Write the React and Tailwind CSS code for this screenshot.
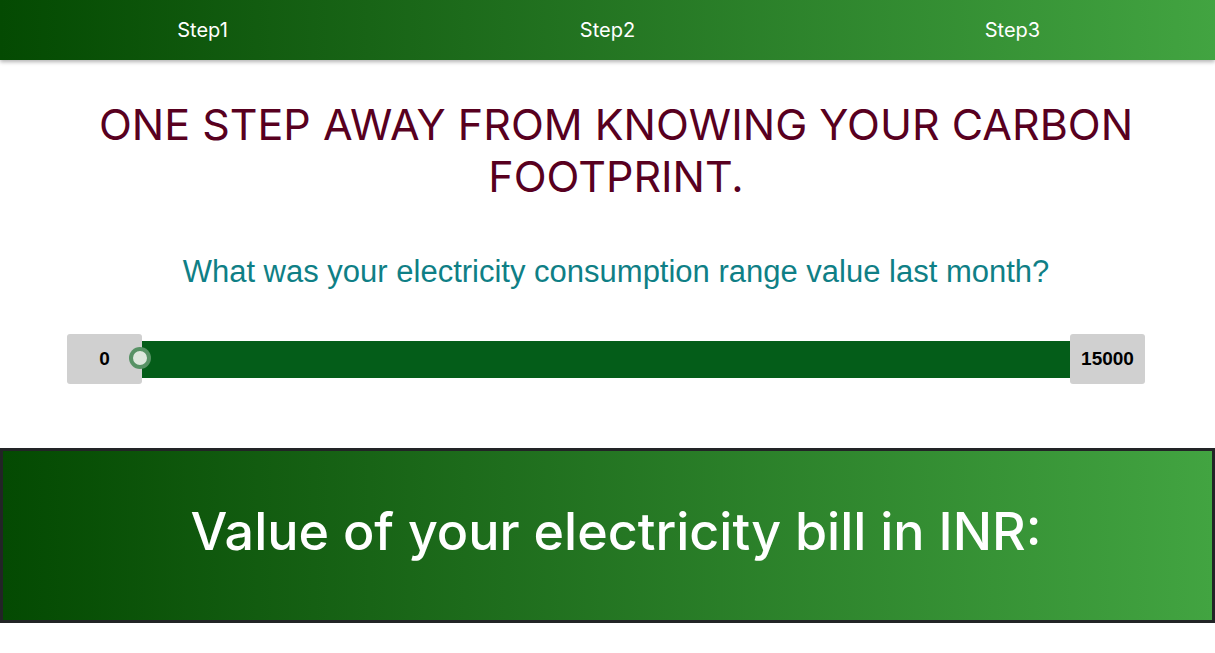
import React from "react";

const steps = ["Step1", "Step2", "Step3"];

export default function App() {
  return (
    <div className="min-h-[653px] bg-white" style={{ fontFamily: "Inter, sans-serif" }}>
      {/* top steps bar */}
      <nav className="grid h-[60px] grid-cols-3 items-center bg-gradient-to-r from-[#044a02] to-[#42a441] shadow-[0_2px_4px_rgba(0,0,0,0.3)]">
        {steps.map((s) => (
          <div key={s} className="text-center text-[20px] font-normal text-white">
            {s}
          </div>
        ))}
      </nav>

      <h1 className="mx-auto mt-[38px] max-w-[1100px] pl-[17px] text-center text-[43px] leading-[1.22] font-normal text-[#58001f]">
        ONE STEP AWAY FROM KNOWING YOUR CARBON FOOTPRINT.
      </h1>

      <p
        className="mt-[46px] pl-[17px] text-center text-[31px] text-[#0f7f86]"
        style={{ fontFamily: '"Liberation Sans", Arial, sans-serif' }}
      >
        What was your electricity consumption range value last month?
      </p>

      {/* range slider */}
      <div
        className="relative mt-[39px] ml-[67px] flex h-[50px] w-[1078px] items-center"
        style={{ fontFamily: '"Liberation Sans", Arial, sans-serif' }}
      >
        <div className="flex h-[50px] w-[75px] items-center justify-center rounded-[3px] bg-[#d0d0d0] text-[19px] font-bold text-black">
          0
        </div>
        <div className="h-[37px] flex-1 bg-[#045d19]" />
        <div className="flex h-[50px] w-[75px] items-center justify-center rounded-[3px] bg-[#d0d0d0] text-[19px] font-bold text-black">
          15000
        </div>
        <span className="absolute top-[13px] left-[62px] h-[22px] w-[22px] rounded-full border-[4px] border-[rgba(30,110,50,0.7)] bg-[#dde7dd]" />
      </div>

      {/* result banner */}
      <section className="mt-[64px] flex h-[175px] items-center justify-center border-[3px] border-[#222426] bg-gradient-to-r from-[#044a02] to-[#42a441] pb-[8px] pl-[17px]">
        <h2 className="text-[52px] font-medium text-white">Value of your electricity bill in INR:</h2>
      </section>
    </div>
  );
}
